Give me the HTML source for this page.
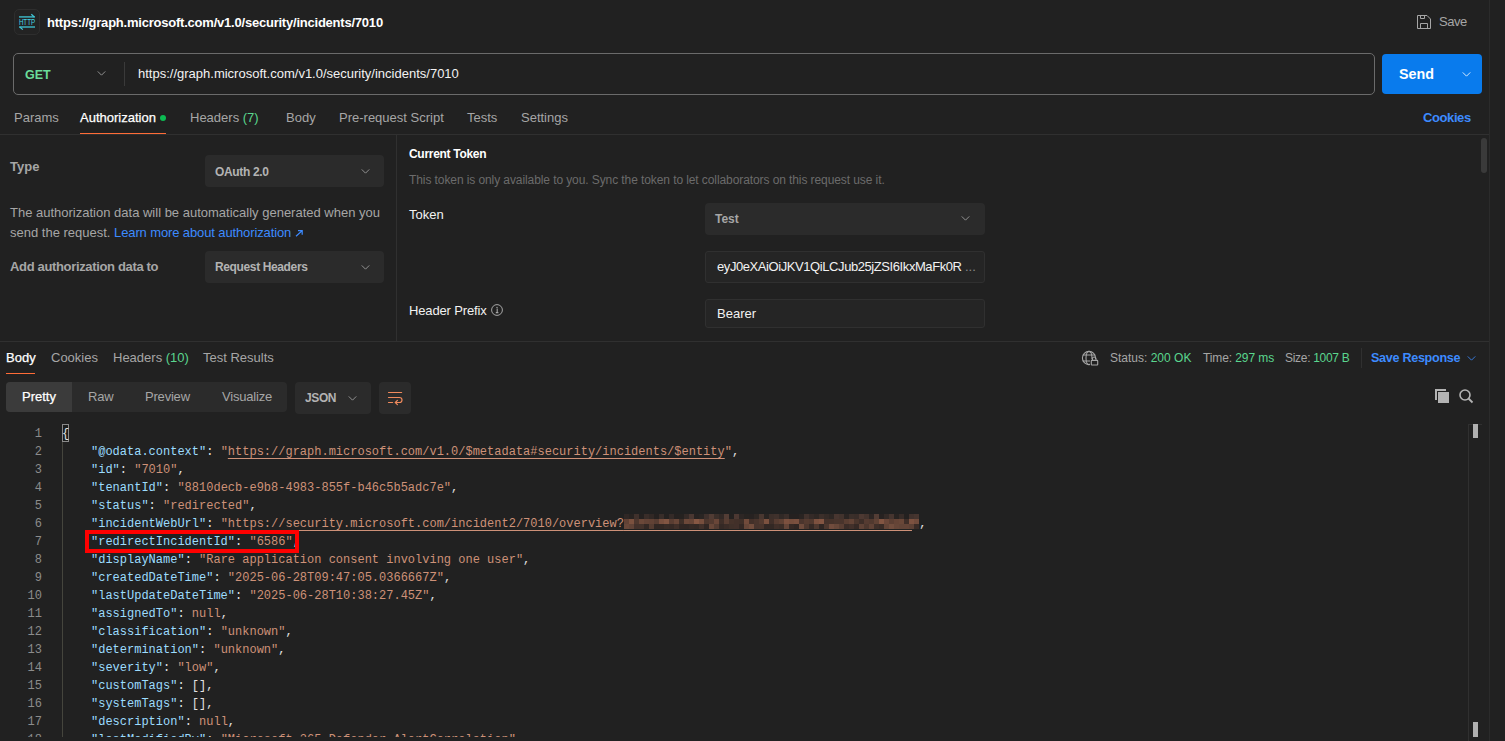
<!DOCTYPE html>
<html><head><meta charset="utf-8">
<style>
*{margin:0;padding:0;box-sizing:border-box}
html,body{width:1505px;height:741px;overflow:hidden;background:#212121;font-family:"Liberation Sans",sans-serif;color:#fff}
.a{position:absolute;white-space:nowrap}
.t13{font-size:13px;line-height:16px}
.t12{font-size:12px;line-height:15px}
.gray{color:#a6a6a6}
.b{font-weight:bold}
.hl{position:absolute;height:1px;background:#303030}
.vl{position:absolute;width:1px;background:#303030}
.dd{position:absolute;background:#2b2b2b;border-radius:4px}
.chev{position:absolute;width:9px;height:5px}
.mono{font-family:"Liberation Mono",monospace;font-size:12px;line-height:18px}
.ln{left:0;width:42px;text-align:right;color:#8c8c8c}.u{text-decoration:underline;text-underline-offset:3px}
.k{color:#9cdcfe}.s{color:#ce9178}.p{color:#e2e2e2}
</style></head><body>

<!-- top title bar -->
<div class="a" style="left:14px;top:9px;width:26px;height:26px;border-radius:5px;background:#232323;border:1px solid #2e2e2e"></div>
<svg class="a" style="left:0;top:0" width="50" height="40" viewBox="0 0 50 40">
  <g stroke="#3aa9b6" fill="none" stroke-width="1.6">
    <path d="M19 16.9H34.6"/>
    <path d="M19.3 27H35"/>
  </g>
  <g stroke="#40c8d8" fill="none" stroke-width="1.2">
    <path d="M31.3 14.2L34.6 17.2"/>
    <path d="M19.5 26.8L22.8 29.6"/>
  </g>
  <text x="18.9" y="25.2" font-family="Liberation Sans" font-size="8.8" fill="#44d4e4" textLength="16.2" lengthAdjust="spacingAndGlyphs">HTTP</text>
</svg>
<div class="a t13 b" style="left:47px;top:15px;letter-spacing:-0.22px">https://graph.microsoft.com/v1.0/security/incidents/7010</div>

<svg class="a" style="left:1417px;top:15px" width="14" height="14" viewBox="0 0 14 14"><path d="M0.5 0.5H10L13.5 4V13.5H0.5Z M3.5 0.5V3.5H7.5V0.5 M3.5 13.5V8.5H10.5V13.5" fill="none" stroke="#a6a6a6" stroke-width="1"/></svg>
<div class="a t13 gray" style="left:1439px;top:14px;letter-spacing:-0.45px">Save</div>
<div class="vl" style="left:1489px;top:0;height:741px;background:#2b2b2b"></div>

<!-- URL bar -->
<div class="a" style="left:13px;top:53px;width:1362px;height:42px;border:1px solid #6b6b6b;border-radius:5px"></div>
<div class="a b" style="left:25px;top:68px;font-size:12.5px;line-height:15px;color:#6bdd9a">GET</div>
<svg class="chev" style="left:97px;top:71px" width="10" height="6" viewBox="0 0 10 6"><path d="M0.5 0.5L5 5L9.5 0.5" fill="none" stroke="#a6a6a6" stroke-width="1"/></svg>
<div class="vl" style="left:124px;top:62px;height:24px;background:#3a3a3a"></div>
<div class="a t13" style="left:138px;top:66px;color:#f2f2f2">https://graph.microsoft.com/v1.0/security/incidents/7010</div>

<div class="a" style="left:1382px;top:54px;width:100px;height:40px;background:#097bed;border-radius:4px"></div>
<div class="a b" style="left:1399px;top:66px;font-size:14.3px;line-height:17px;color:#fff">Send</div>
<svg class="chev" style="left:1462px;top:72px" width="10" height="6" viewBox="0 0 10 6"><path d="M0.5 0.5L5 5L9.5 0.5" fill="none" stroke="#fff" stroke-width="1"/></svg>

<!-- request tabs -->
<div class="a t13 gray" style="left:14px;top:110px">Params</div>
<div class="a t13" style="left:80px;top:110px;color:#fff;-webkit-text-stroke:0.25px #fff">Authorization</div>
<div class="a" style="left:160px;top:115px;width:6px;height:6px;border-radius:3px;background:#0cbb52"></div>
<div class="a t13 gray" style="left:190px;top:110px">Headers <span style="color:#5ad68e">(7)</span></div>
<div class="a t13 gray" style="left:286px;top:110px">Body</div>
<div class="a t13 gray" style="left:339px;top:110px">Pre-request Script</div>
<div class="a t13 gray" style="left:467px;top:110px">Tests</div>
<div class="a t13 gray" style="left:521px;top:110px">Settings</div>
<div class="a t13 b" style="left:1423px;top:110px;color:#3d8bff;letter-spacing:-0.4px">Cookies</div>
<div class="hl" style="left:0;top:134px;width:1489px"></div>
<div class="a" style="left:80px;top:133px;width:86px;height:1px;background:#ff6c37"></div>

<!-- auth panel -->
<div class="vl" style="left:396px;top:135px;height:206px"></div>
<div class="a t13 b gray" style="left:10px;top:159px">Type</div>
<div class="dd" style="left:205px;top:155px;width:179px;height:32px"></div>
<div class="a t12 b" style="left:215px;top:165px;color:#b3b3b3;letter-spacing:-0.33px">OAuth 2.0</div>
<svg class="chev" style="left:361px;top:169px" width="10" height="6" viewBox="0 0 10 6"><path d="M0.5 0.5L5 5L9.5 0.5" fill="none" stroke="#a6a6a6" stroke-width="1"/></svg>

<div class="a t13 gray" style="left:10px;top:203px;line-height:19.8px">The authorization data will be automatically generated when you<br>send the request. <span style="color:#3d8bff;letter-spacing:-0.12px">Learn more about authorization</span></div>
<svg class="a" style="left:295px;top:229px" width="9" height="8" viewBox="0 0 9 8"><path d="M1 7.3L7.2 1.6M3 1.6H7.2V5.8" fill="none" stroke="#3d8bff" stroke-width="1.2"/></svg>

<div class="a t13 b gray" style="left:10px;top:259px;letter-spacing:-0.34px">Add authorization data to</div>
<div class="dd" style="left:205px;top:251px;width:179px;height:32px"></div>
<div class="a t12 b" style="left:215px;top:260px;color:#b3b3b3;letter-spacing:-0.37px">Request Headers</div>
<svg class="chev" style="left:361px;top:265px" width="10" height="6" viewBox="0 0 10 6"><path d="M0.5 0.5L5 5L9.5 0.5" fill="none" stroke="#a6a6a6" stroke-width="1"/></svg>

<div class="a t12 b" style="left:409px;top:147px;letter-spacing:-0.3px">Current Token</div>
<div class="a t12" style="left:409px;top:173px;color:#6b6b6b;letter-spacing:-0.09px">This token is only available to you. Sync the token to let collaborators on this request use it.</div>
<div class="a t13" style="left:409px;top:207px;color:#f2f2f2">Token</div>
<div class="dd" style="left:705px;top:203px;width:280px;height:32px"></div>
<div class="a t12 b" style="left:715px;top:212px;color:#a6a6a6">Test</div>
<svg class="chev" style="left:961px;top:216px" width="10" height="6" viewBox="0 0 10 6"><path d="M0.5 0.5L5 5L9.5 0.5" fill="none" stroke="#a6a6a6" stroke-width="1"/></svg>

<div class="a" style="left:705px;top:251px;width:280px;height:32px;border:1px solid #303030;border-radius:3px;background:#252525"></div>
<div class="a t13" style="left:717px;top:259px;color:#f2f2f2;letter-spacing:-0.42px">eyJ0eXAiOiJKV1QiLCJub25jZSI6IkxMaFk0R</div><div class="a t13" style="left:965px;top:259px;color:#8a8a8a">...</div>
<div class="a t13" style="left:409px;top:303px;color:#f2f2f2;letter-spacing:-0.15px">Header Prefix</div>
<svg class="a" style="left:491px;top:304px" width="12" height="12" viewBox="0 0 12 12"><circle cx="6" cy="6" r="5.4" fill="none" stroke="#a6a6a6" stroke-width="1"/><path d="M5.6 5H6.2V8.6M4.8 8.6H7.4" fill="none" stroke="#a6a6a6" stroke-width="1.1"/><circle cx="6" cy="3.4" r="0.7" fill="#a6a6a6"/></svg>
<div class="a" style="left:705px;top:299px;width:280px;height:29px;border:1px solid #303030;border-radius:3px;background:#252525"></div>
<div class="a t13" style="left:717px;top:306px;color:#f2f2f2">Bearer</div>

<div class="a" style="left:1481px;top:138px;width:6px;height:35px;border-radius:3px;background:#3a3a3a"></div>
<div class="hl" style="left:0;top:341px;width:1489px"></div>

<!-- response header -->
<div class="a t13" style="left:6px;top:350px;color:#fff;-webkit-text-stroke:0.25px #fff">Body</div>
<div class="a t13 gray" style="left:51px;top:350px">Cookies</div>
<div class="a t13 gray" style="left:113px;top:350px">Headers <span style="color:#5ad68e">(10)</span></div>
<div class="a t13 gray" style="left:203px;top:350px">Test Results</div>
<div class="a" style="left:6px;top:373px;width:29px;height:1px;background:#ff6c37"></div>

<svg class="a" style="left:1076px;top:346px" width="30" height="24" viewBox="0 0 30 24">
<g fill="none" stroke="#a6a6a6" stroke-width="1.1">
<circle cx="13" cy="12" r="6.6"/>
<ellipse cx="13" cy="12" rx="3" ry="6.6"/>
<path d="M6.8 9H19.2M6.8 15H14"/>
</g>
<rect x="14" y="13" width="9" height="7" fill="#212121"/>
<path d="M16.4 14.2V12.8A1.8 1.8 0 0 1 20 12.8V14.2" fill="none" stroke="#a6a6a6" stroke-width="1.1"/>
<rect x="15.3" y="14.4" width="6.4" height="4.6" rx="0.6" fill="none" stroke="#a6a6a6" stroke-width="1.1"/>
</svg>
<div class="a t12 gray" style="left:1110px;top:351px">Status: <span style="color:#5ad68e">200 OK</span></div>
<div class="a t12 gray" style="left:1203px;top:351px;letter-spacing:-0.1px">Time: <span style="color:#5ad68e">297 ms</span></div>
<div class="a t12 gray" style="left:1285px;top:351px;letter-spacing:-0.3px">Size: <span style="color:#5ad68e">1007 B</span></div>
<div class="vl" style="left:1361px;top:348px;height:20px"></div>
<div class="a b" style="left:1371px;top:351px;font-size:12.6px;line-height:15px;color:#3d8bff;letter-spacing:-0.3px">Save Response</div>
<svg class="chev" style="left:1467px;top:356px" width="10" height="6" viewBox="0 0 10 6"><path d="M0.5 0.5L5 5L9.5 0.5" fill="none" stroke="#3d8bff" stroke-width="1"/></svg>

<!-- segmented -->
<div class="dd" style="left:6px;top:382px;width:281px;height:30px"></div>
<div class="a" style="left:6px;top:382px;width:66px;height:30px;background:#3b3b3b;border-radius:4px 0 0 4px"></div>
<div class="a t13" style="left:22px;top:389px;color:#fff;-webkit-text-stroke:0.25px #fff">Pretty</div>
<div class="a t13 gray" style="left:88px;top:389px;letter-spacing:-0.2px">Raw</div>
<div class="a t13 gray" style="left:145px;top:389px;letter-spacing:-0.2px">Preview</div>
<div class="a t13 gray" style="left:222px;top:389px;letter-spacing:-0.2px">Visualize</div>
<div class="dd" style="left:295px;top:382px;width:76px;height:32px"></div>
<div class="a t12 b" style="left:305px;top:391px;color:#b3b3b3;letter-spacing:-0.4px">JSON</div>
<svg class="chev" style="left:348px;top:396px" width="10" height="6" viewBox="0 0 10 6"><path d="M0.5 0.5L5 5L9.5 0.5" fill="none" stroke="#a6a6a6" stroke-width="1"/></svg>
<div class="dd" style="left:379px;top:382px;width:32px;height:32px"></div>
<svg class="a" style="left:380px;top:384px" width="30" height="28" viewBox="0 0 30 28"><g fill="none" stroke="#f08a5d" stroke-width="1.2" stroke-linecap="round"><path d="M8.5 8.5H21.6M8.5 13.5H19.5A2.5 2.5 0 0 1 19.5 18.5H15.3M17.4 16.4L15.3 18.5L17.4 20.6M8.5 18.5H12.6"/></g></svg>

<svg class="a" style="left:1435px;top:389px" width="15" height="15" viewBox="0 0 15 15"><path d="M0 0H11V2H2V11H0Z" fill="#b3b3b3"/><rect x="3" y="3" width="11" height="11" fill="#b3b3b3"/></svg>
<svg class="a" style="left:1459px;top:389px" width="15" height="15" viewBox="0 0 15 15"><circle cx="6" cy="6" r="5" fill="none" stroke="#b3b3b3" stroke-width="1.6"/><path d="M9.5 9.5L13.5 13.5" stroke="#b3b3b3" stroke-width="1.8"/></svg>

<!-- code -->
<div class="a" style="left:62px;top:424px;width:7px;height:18px;border:1px solid #8a8a8a;background:#1c1d1c"></div>
<div class="a" style="left:0;top:425px;width:1468px;height:312px;overflow:hidden">
<div class="a" style="left:62px;top:17px;width:1px;height:300px;background:#45453d"></div>
<!--CODE-->
<div class="a mono ln" style="top:0px">1</div>
<div class="a mono" style="left:62px;top:0px"><span class="p">{</span></div>
<div class="a mono ln" style="top:18px">2</div>
<div class="a mono" style="left:91px;top:18px"><span class="k">&quot;@odata.context&quot;</span><span class="p">: </span><span class="s">&quot;</span><span class="s u">https://graph.microsoft.com/v1.0/$metadata#security/incidents/$entity</span><span class="s">&quot;</span><span class="p">,</span></div>
<div class="a mono ln" style="top:36px">3</div>
<div class="a mono" style="left:91px;top:36px"><span class="k">&quot;id&quot;</span><span class="p">: </span><span class="s">&quot;7010&quot;</span><span class="p">,</span></div>
<div class="a mono ln" style="top:54px">4</div>
<div class="a mono" style="left:91px;top:54px"><span class="k">&quot;tenantId&quot;</span><span class="p">: </span><span class="s">&quot;8810decb-e9b8-4983-855f-b46c5b5adc7e&quot;</span><span class="p">,</span></div>
<div class="a mono ln" style="top:72px">5</div>
<div class="a mono" style="left:91px;top:72px"><span class="k">&quot;status&quot;</span><span class="p">: </span><span class="s">&quot;redirected&quot;</span><span class="p">,</span></div>
<div class="a mono ln" style="top:90px">6</div>
<div class="a mono" style="left:91px;top:90px"><span class="k">&quot;incidentWebUrl&quot;</span><span class="p">: </span><span class="s">&quot;</span><span class="s u">https://security.microsoft.com/incident2/7010/overview?</span><span class="s u">&nbsp;&nbsp;&nbsp;&nbsp;&nbsp;&nbsp;&nbsp;&nbsp;&nbsp;&nbsp;&nbsp;&nbsp;&nbsp;&nbsp;&nbsp;&nbsp;&nbsp;&nbsp;&nbsp;&nbsp;&nbsp;&nbsp;&nbsp;&nbsp;&nbsp;&nbsp;&nbsp;&nbsp;&nbsp;&nbsp;&nbsp;&nbsp;&nbsp;&nbsp;&nbsp;&nbsp;&nbsp;&nbsp;&nbsp;&nbsp;</span><span class="s"> </span><span class="p">,</span></div>
<div class="a mono ln" style="top:108px">7</div>
<div class="a mono" style="left:91px;top:108px"><span class="k">&quot;redirectIncidentId&quot;</span><span class="p">: </span><span class="s">&quot;6586&quot;</span><span class="p">,</span></div>
<div class="a mono ln" style="top:126px">8</div>
<div class="a mono" style="left:91px;top:126px"><span class="k">&quot;displayName&quot;</span><span class="p">: </span><span class="s">&quot;Rare application consent involving one user&quot;</span><span class="p">,</span></div>
<div class="a mono ln" style="top:144px">9</div>
<div class="a mono" style="left:91px;top:144px"><span class="k">&quot;createdDateTime&quot;</span><span class="p">: </span><span class="s">&quot;2025-06-28T09:47:05.0366667Z&quot;</span><span class="p">,</span></div>
<div class="a mono ln" style="top:162px">10</div>
<div class="a mono" style="left:91px;top:162px"><span class="k">&quot;lastUpdateDateTime&quot;</span><span class="p">: </span><span class="s">&quot;2025-06-28T10:38:27.45Z&quot;</span><span class="p">,</span></div>
<div class="a mono ln" style="top:180px">11</div>
<div class="a mono" style="left:91px;top:180px"><span class="k">&quot;assignedTo&quot;</span><span class="p">: </span><span class="s">null</span><span class="p">,</span></div>
<div class="a mono ln" style="top:198px">12</div>
<div class="a mono" style="left:91px;top:198px"><span class="k">&quot;classification&quot;</span><span class="p">: </span><span class="s">&quot;unknown&quot;</span><span class="p">,</span></div>
<div class="a mono ln" style="top:216px">13</div>
<div class="a mono" style="left:91px;top:216px"><span class="k">&quot;determination&quot;</span><span class="p">: </span><span class="s">&quot;unknown&quot;</span><span class="p">,</span></div>
<div class="a mono ln" style="top:234px">14</div>
<div class="a mono" style="left:91px;top:234px"><span class="k">&quot;severity&quot;</span><span class="p">: </span><span class="s">&quot;low&quot;</span><span class="p">,</span></div>
<div class="a mono ln" style="top:252px">15</div>
<div class="a mono" style="left:91px;top:252px"><span class="k">&quot;customTags&quot;</span><span class="p">: []</span><span class="p">,</span></div>
<div class="a mono ln" style="top:270px">16</div>
<div class="a mono" style="left:91px;top:270px"><span class="k">&quot;systemTags&quot;</span><span class="p">: []</span><span class="p">,</span></div>
<div class="a mono ln" style="top:288px">17</div>
<div class="a mono" style="left:91px;top:288px"><span class="k">&quot;description&quot;</span><span class="p">: </span><span class="s">null</span><span class="p">,</span></div>
<div class="a mono ln" style="top:306px">18</div>
<div class="a mono" style="left:91px;top:306px"><span class="k">&quot;lastModifiedBy&quot;</span><span class="p">: </span><span class="s">&quot;Microsoft 365 Defender-AlertCorrelation&quot;</span><span class="p">,</span></div>
<!--/CODE-->
</div>
<!--BLUR-->
<div class="a" style="left:624px;top:514px;width:5px;height:5px;background:#2f2725"></div>
<div class="a" style="left:629px;top:514px;width:5px;height:5px;background:#282321"></div>
<div class="a" style="left:634px;top:514px;width:5px;height:5px;background:#40312c"></div>
<div class="a" style="left:639px;top:514px;width:5px;height:5px;background:#252120"></div>
<div class="a" style="left:644px;top:514px;width:5px;height:5px;background:#392d29"></div>
<div class="a" style="left:649px;top:514px;width:5px;height:5px;background:#312825"></div>
<div class="a" style="left:654px;top:514px;width:5px;height:5px;background:#252120"></div>
<div class="a" style="left:659px;top:514px;width:5px;height:5px;background:#382d29"></div>
<div class="a" style="left:664px;top:514px;width:5px;height:5px;background:#242120"></div>
<div class="a" style="left:669px;top:514px;width:5px;height:5px;background:#342a27"></div>
<div class="a" style="left:674px;top:514px;width:5px;height:5px;background:#252120"></div>
<div class="a" style="left:679px;top:514px;width:5px;height:5px;background:#262220"></div>
<div class="a" style="left:684px;top:514px;width:5px;height:5px;background:#342a27"></div>
<div class="a" style="left:689px;top:514px;width:5px;height:5px;background:#4a3731"></div>
<div class="a" style="left:694px;top:514px;width:5px;height:5px;background:#272221"></div>
<div class="a" style="left:699px;top:514px;width:5px;height:5px;background:#2a2523"></div>
<div class="a" style="left:704px;top:514px;width:5px;height:5px;background:#3e302c"></div>
<div class="a" style="left:709px;top:514px;width:5px;height:5px;background:#513c34"></div>
<div class="a" style="left:714px;top:514px;width:5px;height:5px;background:#3b2f2a"></div>
<div class="a" style="left:719px;top:514px;width:5px;height:5px;background:#322926"></div>
<div class="a" style="left:724px;top:514px;width:5px;height:5px;background:#533d35"></div>
<div class="a" style="left:729px;top:514px;width:5px;height:5px;background:#242120"></div>
<div class="a" style="left:734px;top:514px;width:5px;height:5px;background:#4c3832"></div>
<div class="a" style="left:739px;top:514px;width:5px;height:5px;background:#2d2624"></div>
<div class="a" style="left:744px;top:514px;width:5px;height:5px;background:#272321"></div>
<div class="a" style="left:749px;top:514px;width:5px;height:5px;background:#272221"></div>
<div class="a" style="left:754px;top:514px;width:5px;height:5px;background:#2e2724"></div>
<div class="a" style="left:759px;top:514px;width:5px;height:5px;background:#493730"></div>
<div class="a" style="left:764px;top:514px;width:5px;height:5px;background:#292422"></div>
<div class="a" style="left:769px;top:514px;width:5px;height:5px;background:#3c2f2a"></div>
<div class="a" style="left:774px;top:514px;width:5px;height:5px;background:#3f312c"></div>
<div class="a" style="left:779px;top:514px;width:5px;height:5px;background:#312926"></div>
<div class="a" style="left:784px;top:514px;width:5px;height:5px;background:#3a2e2a"></div>
<div class="a" style="left:789px;top:514px;width:5px;height:5px;background:#252120"></div>
<div class="a" style="left:794px;top:514px;width:5px;height:5px;background:#252120"></div>
<div class="a" style="left:799px;top:514px;width:5px;height:5px;background:#2a2422"></div>
<div class="a" style="left:804px;top:514px;width:5px;height:5px;background:#41322d"></div>
<div class="a" style="left:809px;top:514px;width:5px;height:5px;background:#342a27"></div>
<div class="a" style="left:814px;top:514px;width:5px;height:5px;background:#2e2724"></div>
<div class="a" style="left:819px;top:514px;width:5px;height:5px;background:#3c2f2a"></div>
<div class="a" style="left:824px;top:514px;width:5px;height:5px;background:#352b27"></div>
<div class="a" style="left:829px;top:514px;width:5px;height:5px;background:#2e2724"></div>
<div class="a" style="left:834px;top:514px;width:5px;height:5px;background:#483630"></div>
<div class="a" style="left:839px;top:514px;width:5px;height:5px;background:#42332d"></div>
<div class="a" style="left:844px;top:514px;width:5px;height:5px;background:#2b2523"></div>
<div class="a" style="left:849px;top:514px;width:5px;height:5px;background:#3b2f2a"></div>
<div class="a" style="left:854px;top:514px;width:5px;height:5px;background:#392d29"></div>
<div class="a" style="left:859px;top:514px;width:5px;height:5px;background:#4d3932"></div>
<div class="a" style="left:864px;top:514px;width:5px;height:5px;background:#44342e"></div>
<div class="a" style="left:869px;top:514px;width:5px;height:5px;background:#2d2624"></div>
<div class="a" style="left:874px;top:514px;width:5px;height:5px;background:#533d35"></div>
<div class="a" style="left:879px;top:514px;width:5px;height:5px;background:#272221"></div>
<div class="a" style="left:884px;top:514px;width:5px;height:5px;background:#332a27"></div>
<div class="a" style="left:889px;top:514px;width:5px;height:5px;background:#46352f"></div>
<div class="a" style="left:894px;top:514px;width:5px;height:5px;background:#282321"></div>
<div class="a" style="left:899px;top:514px;width:5px;height:5px;background:#372c28"></div>
<div class="a" style="left:904px;top:514px;width:5px;height:5px;background:#242120"></div>
<div class="a" style="left:909px;top:514px;width:5px;height:5px;background:#41322d"></div>
<div class="a" style="left:914px;top:514px;width:5px;height:5px;background:#46352f"></div>
<div class="a" style="left:624px;top:519px;width:5px;height:5px;background:#614235"></div>
<div class="a" style="left:629px;top:519px;width:5px;height:5px;background:#7b513f"></div>
<div class="a" style="left:634px;top:519px;width:5px;height:5px;background:#4e372e"></div>
<div class="a" style="left:639px;top:519px;width:5px;height:5px;background:#6b4839"></div>
<div class="a" style="left:644px;top:519px;width:5px;height:5px;background:#634336"></div>
<div class="a" style="left:649px;top:519px;width:5px;height:5px;background:#614235"></div>
<div class="a" style="left:654px;top:519px;width:5px;height:5px;background:#583d32"></div>
<div class="a" style="left:659px;top:519px;width:5px;height:5px;background:#784f3e"></div>
<div class="a" style="left:664px;top:519px;width:5px;height:5px;background:#815542"></div>
<div class="a" style="left:669px;top:519px;width:5px;height:5px;background:#593d32"></div>
<div class="a" style="left:674px;top:519px;width:5px;height:5px;background:#684638"></div>
<div class="a" style="left:679px;top:519px;width:5px;height:5px;background:#3f2f28"></div>
<div class="a" style="left:684px;top:519px;width:5px;height:5px;background:#6c4839"></div>
<div class="a" style="left:689px;top:519px;width:5px;height:5px;background:#674537"></div>
<div class="a" style="left:694px;top:519px;width:5px;height:5px;background:#865743"></div>
<div class="a" style="left:699px;top:519px;width:5px;height:5px;background:#764e3d"></div>
<div class="a" style="left:704px;top:519px;width:5px;height:5px;background:#4c362d"></div>
<div class="a" style="left:709px;top:519px;width:5px;height:5px;background:#533a30"></div>
<div class="a" style="left:714px;top:519px;width:5px;height:5px;background:#694638"></div>
<div class="a" style="left:719px;top:519px;width:5px;height:5px;background:#3e2e28"></div>
<div class="a" style="left:724px;top:519px;width:5px;height:5px;background:#583d32"></div>
<div class="a" style="left:729px;top:519px;width:5px;height:5px;background:#45322a"></div>
<div class="a" style="left:734px;top:519px;width:5px;height:5px;background:#423029"></div>
<div class="a" style="left:739px;top:519px;width:5px;height:5px;background:#3f2f28"></div>
<div class="a" style="left:744px;top:519px;width:5px;height:5px;background:#714b3b"></div>
<div class="a" style="left:749px;top:519px;width:5px;height:5px;background:#433029"></div>
<div class="a" style="left:754px;top:519px;width:5px;height:5px;background:#49342c"></div>
<div class="a" style="left:759px;top:519px;width:5px;height:5px;background:#533a30"></div>
<div class="a" style="left:764px;top:519px;width:5px;height:5px;background:#7b513f"></div>
<div class="a" style="left:769px;top:519px;width:5px;height:5px;background:#402f29"></div>
<div class="a" style="left:774px;top:519px;width:5px;height:5px;background:#573c31"></div>
<div class="a" style="left:779px;top:519px;width:5px;height:5px;background:#5f4134"></div>
<div class="a" style="left:784px;top:519px;width:5px;height:5px;background:#7c513f"></div>
<div class="a" style="left:789px;top:519px;width:5px;height:5px;background:#764e3d"></div>
<div class="a" style="left:794px;top:519px;width:5px;height:5px;background:#7a503f"></div>
<div class="a" style="left:799px;top:519px;width:5px;height:5px;background:#4b352d"></div>
<div class="a" style="left:804px;top:519px;width:5px;height:5px;background:#553b30"></div>
<div class="a" style="left:809px;top:519px;width:5px;height:5px;background:#51392f"></div>
<div class="a" style="left:814px;top:519px;width:5px;height:5px;background:#7c513f"></div>
<div class="a" style="left:819px;top:519px;width:5px;height:5px;background:#835542"></div>
<div class="a" style="left:824px;top:519px;width:5px;height:5px;background:#44312a"></div>
<div class="a" style="left:829px;top:519px;width:5px;height:5px;background:#45322a"></div>
<div class="a" style="left:834px;top:519px;width:5px;height:5px;background:#48342c"></div>
<div class="a" style="left:839px;top:519px;width:5px;height:5px;background:#49342c"></div>
<div class="a" style="left:844px;top:519px;width:5px;height:5px;background:#5a3e32"></div>
<div class="a" style="left:849px;top:519px;width:5px;height:5px;background:#624336"></div>
<div class="a" style="left:854px;top:519px;width:5px;height:5px;background:#4a352c"></div>
<div class="a" style="left:859px;top:519px;width:5px;height:5px;background:#3e2e28"></div>
<div class="a" style="left:864px;top:519px;width:5px;height:5px;background:#553b31"></div>
<div class="a" style="left:869px;top:519px;width:5px;height:5px;background:#51392f"></div>
<div class="a" style="left:874px;top:519px;width:5px;height:5px;background:#604235"></div>
<div class="a" style="left:879px;top:519px;width:5px;height:5px;background:#825542"></div>
<div class="a" style="left:884px;top:519px;width:5px;height:5px;background:#6b4739"></div>
<div class="a" style="left:889px;top:519px;width:5px;height:5px;background:#5c3f33"></div>
<div class="a" style="left:894px;top:519px;width:5px;height:5px;background:#654436"></div>
<div class="a" style="left:899px;top:519px;width:5px;height:5px;background:#694738"></div>
<div class="a" style="left:904px;top:519px;width:5px;height:5px;background:#3f2e28"></div>
<div class="a" style="left:909px;top:519px;width:5px;height:5px;background:#7d5240"></div>
<div class="a" style="left:914px;top:519px;width:5px;height:5px;background:#724c3c"></div>
<div class="a" style="left:624px;top:524px;width:5px;height:5px;background:#684739"></div>
<div class="a" style="left:629px;top:524px;width:5px;height:5px;background:#614337"></div>
<div class="a" style="left:634px;top:524px;width:5px;height:5px;background:#43312b"></div>
<div class="a" style="left:639px;top:524px;width:5px;height:5px;background:#44322b"></div>
<div class="a" style="left:644px;top:524px;width:5px;height:5px;background:#332824"></div>
<div class="a" style="left:649px;top:524px;width:5px;height:5px;background:#553c31"></div>
<div class="a" style="left:654px;top:524px;width:5px;height:5px;background:#312723"></div>
<div class="a" style="left:659px;top:524px;width:5px;height:5px;background:#322723"></div>
<div class="a" style="left:664px;top:524px;width:5px;height:5px;background:#382b26"></div>
<div class="a" style="left:669px;top:524px;width:5px;height:5px;background:#362925"></div>
<div class="a" style="left:674px;top:524px;width:5px;height:5px;background:#402f29"></div>
<div class="a" style="left:679px;top:524px;width:5px;height:5px;background:#312623"></div>
<div class="a" style="left:684px;top:524px;width:5px;height:5px;background:#302623"></div>
<div class="a" style="left:689px;top:524px;width:5px;height:5px;background:#352925"></div>
<div class="a" style="left:694px;top:524px;width:5px;height:5px;background:#332824"></div>
<div class="a" style="left:699px;top:524px;width:5px;height:5px;background:#41302a"></div>
<div class="a" style="left:704px;top:524px;width:5px;height:5px;background:#302623"></div>
<div class="a" style="left:709px;top:524px;width:5px;height:5px;background:#684739"></div>
<div class="a" style="left:714px;top:524px;width:5px;height:5px;background:#533b31"></div>
<div class="a" style="left:719px;top:524px;width:5px;height:5px;background:#352925"></div>
<div class="a" style="left:724px;top:524px;width:5px;height:5px;background:#3b2c27"></div>
<div class="a" style="left:729px;top:524px;width:5px;height:5px;background:#403029"></div>
<div class="a" style="left:734px;top:524px;width:5px;height:5px;background:#42302a"></div>
<div class="a" style="left:739px;top:524px;width:5px;height:5px;background:#342824"></div>
<div class="a" style="left:744px;top:524px;width:5px;height:5px;background:#664638"></div>
<div class="a" style="left:749px;top:524px;width:5px;height:5px;background:#724d3d"></div>
<div class="a" style="left:754px;top:524px;width:5px;height:5px;background:#48342d"></div>
<div class="a" style="left:759px;top:524px;width:5px;height:5px;background:#4a352d"></div>
<div class="a" style="left:764px;top:524px;width:5px;height:5px;background:#322724"></div>
<div class="a" style="left:769px;top:524px;width:5px;height:5px;background:#332824"></div>
<div class="a" style="left:774px;top:524px;width:5px;height:5px;background:#402f29"></div>
<div class="a" style="left:779px;top:524px;width:5px;height:5px;background:#3b2d27"></div>
<div class="a" style="left:784px;top:524px;width:5px;height:5px;background:#644538"></div>
<div class="a" style="left:789px;top:524px;width:5px;height:5px;background:#362925"></div>
<div class="a" style="left:794px;top:524px;width:5px;height:5px;background:#302623"></div>
<div class="a" style="left:799px;top:524px;width:5px;height:5px;background:#6e4b3c"></div>
<div class="a" style="left:804px;top:524px;width:5px;height:5px;background:#4d372e"></div>
<div class="a" style="left:809px;top:524px;width:5px;height:5px;background:#352925"></div>
<div class="a" style="left:814px;top:524px;width:5px;height:5px;background:#4e382f"></div>
<div class="a" style="left:819px;top:524px;width:5px;height:5px;background:#302623"></div>
<div class="a" style="left:824px;top:524px;width:5px;height:5px;background:#4d372e"></div>
<div class="a" style="left:829px;top:524px;width:5px;height:5px;background:#714c3d"></div>
<div class="a" style="left:834px;top:524px;width:5px;height:5px;background:#674739"></div>
<div class="a" style="left:839px;top:524px;width:5px;height:5px;background:#593e33"></div>
<div class="a" style="left:844px;top:524px;width:5px;height:5px;background:#3b2c27"></div>
<div class="a" style="left:849px;top:524px;width:5px;height:5px;background:#42302a"></div>
<div class="a" style="left:854px;top:524px;width:5px;height:5px;background:#362925"></div>
<div class="a" style="left:859px;top:524px;width:5px;height:5px;background:#5f4236"></div>
<div class="a" style="left:864px;top:524px;width:5px;height:5px;background:#4d372e"></div>
<div class="a" style="left:869px;top:524px;width:5px;height:5px;background:#604236"></div>
<div class="a" style="left:874px;top:524px;width:5px;height:5px;background:#3f2f29"></div>
<div class="a" style="left:879px;top:524px;width:5px;height:5px;background:#392b26"></div>
<div class="a" style="left:884px;top:524px;width:5px;height:5px;background:#634437"></div>
<div class="a" style="left:889px;top:524px;width:5px;height:5px;background:#714d3d"></div>
<div class="a" style="left:894px;top:524px;width:5px;height:5px;background:#664638"></div>
<div class="a" style="left:899px;top:524px;width:5px;height:5px;background:#624437"></div>
<div class="a" style="left:904px;top:524px;width:5px;height:5px;background:#634437"></div>
<div class="a" style="left:909px;top:524px;width:5px;height:5px;background:#5d4135"></div>
<div class="a" style="left:914px;top:524px;width:5px;height:5px;background:#392b26"></div>
<!--/BLUR-->
<div class="a" style="left:85px;top:530px;width:214px;height:23px;border:4px solid #ff0000"></div>
<div class="vl" style="left:1468px;top:424px;height:317px"></div>
<div class="hl" style="left:1468px;top:424px;width:14px"></div>
<div class="a" style="left:1473px;top:424px;width:5px;height:14px;background:#b0b0b0"></div>
<div class="a" style="left:1473px;top:722px;width:5px;height:15px;background:#b0b0b0"></div>


</body></html>
